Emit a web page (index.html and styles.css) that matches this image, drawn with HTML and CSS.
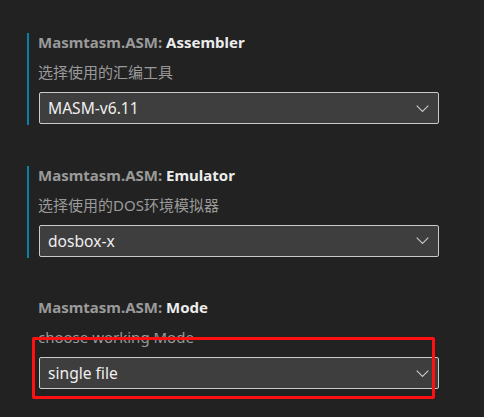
FILE: index.html
```html
<!DOCTYPE html>
<html>
<head>
<meta charset="utf-8">
<link rel="stylesheet" href="styles.css">
</head>
<body>
<div class="settings">
  <div class="item modified">
    <div class="title"><span class="cat">Masmtasm.ASM: </span><span class="key">Assembler</span></div>
    <div class="desc">选择使用的汇编工具</div>
    <div class="select"><span class="value">MASM-v6.11</span>
      <svg class="chev" width="13" height="8" viewBox="0 0 13 8"><path d="M0.7 0.7 L6.5 6.5 L12.3 0.7" fill="none" stroke="#c5c5c5" stroke-width="1.2"/></svg>
    </div>
  </div>
  <div class="item modified">
    <div class="title"><span class="cat">Masmtasm.ASM: </span><span class="key">Emulator</span></div>
    <div class="desc">选择使用的DOS环境模拟器</div>
    <div class="select"><span class="value">dosbox-x</span>
      <svg class="chev" width="13" height="8" viewBox="0 0 13 8"><path d="M0.7 0.7 L6.5 6.5 L12.3 0.7" fill="none" stroke="#c5c5c5" stroke-width="1.2"/></svg>
    </div>
  </div>
  <div class="item">
    <div class="title"><span class="cat">Masmtasm.ASM: </span><span class="key">Mode</span></div>
    <div class="desc">choose working Mode</div>
    <div class="select"><span class="value">single file</span>
      <svg class="chev" width="13" height="8" viewBox="0 0 13 8"><path d="M0.7 0.7 L6.5 6.5 L12.3 0.7" fill="none" stroke="#c5c5c5" stroke-width="1.2"/></svg>
    </div>
    <div class="highlight"></div>
  </div>
</div>
</body>
</html>
```
FILE: styles.css
```css
html, body {
  margin: 0;
  padding: 0;
  background: #222222;
  height: 100%;
  overflow: hidden;
}
body {
  font-family: "Noto Sans", "Noto Sans CJK SC", sans-serif;
  font-size: 15px;
}
.settings {
  padding: 33px 0 0 27px;
  display: flex;
  flex-direction: column;
  gap: 40.5px;
}
.item {
  position: relative;
  border-left: 2px solid transparent;
  padding-left: 9px;
  padding-bottom: 1px;
  width: 403px;
}
.item.modified {
  border-left-color: #0c7fa6;
}
.title {
  height: 20px;
  line-height: 18px;
  font-weight: 700;
  white-space: nowrap;
}
.cat {
  color: #9a9a9a;
}
.key {
  color: #ececec;
}
.desc {
  margin-top: 9px;
  height: 20px;
  line-height: 20px;
  color: #9a9a9a;
  white-space: nowrap;
}
.select {
  margin-top: 10px;
  margin-left: 1px;
  height: 32px;
  box-sizing: border-box;
  width: 400px;
  border: 1px solid #cacaca;
  border-radius: 2px;
  background: #3f3e3f;
  display: flex;
  align-items: center;
  justify-content: space-between;
  padding: 0 9px 0 8px;
  color: #efefef;
}
.value {
  line-height: 20px;
  font-size: 15.6px;
}
.chev {
  display: block;
  margin-top: 1px;
}
.highlight {
  position: absolute;
  left: 3px;
  top: 39px;
  width: 403px;
  height: 62px;
  box-sizing: border-box;
  border: 3px solid #ff1111;
  border-radius: 2px;
}
```
